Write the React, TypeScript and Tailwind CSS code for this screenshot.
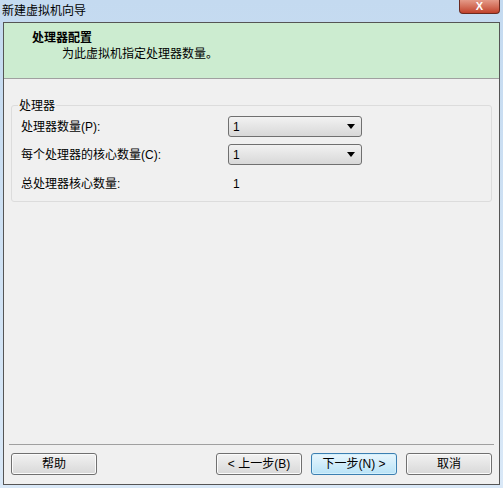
import React from "react";

const font = { fontFamily: '"Liberation Sans", "Noto Sans CJK SC", sans-serif' };

const Combo = () => (
  <div className="flex h-[21px] w-[134px] items-center justify-between rounded-[3px] border border-[#707070] bg-gradient-to-b from-[#f2f2f2] to-[#d8d8d8] pl-[4px] pr-[6px] text-[12px] text-black">
    <span>1</span>
    <svg width="8" height="5" viewBox="0 0 8 5">
      <path d="M0 0h8L4 5z" fill="#000" />
    </svg>
  </div>
);

const Button = ({ label, primary }: { label: string; primary?: boolean }) => (
  <div
    className={
      primary
        ? "flex h-[22px] w-[86px] items-center justify-center rounded-[3px] border border-[#3c7fb1] bg-gradient-to-b from-[#e8f6fd] to-[#b9e3f7] text-[12px] text-black shadow-[inset_0_0_0_1px_#d4f0fc]"
        : "flex h-[22px] w-[86px] items-center justify-center rounded-[3px] border border-[#707070] bg-gradient-to-b from-[#f2f2f2] to-[#d8d8d8] text-[12px] text-black shadow-[inset_0_0_0_1px_#fbfbfb]"
    }
  >
    {label}
  </div>
);

export default function App() {
  return (
    <div
      className="flex h-[488px] w-[503px] flex-col bg-gradient-to-b from-[#c4daf0] to-[#d9e8f7]"
      style={font}
    >
      {/* title bar */}
      <div className="flex h-[22px] items-start justify-between">
        <span className="pl-[2px] pt-[2px] text-[12px] text-black">新建虚拟机向导</span>
        <div className="mr-[3px] flex h-[14px] w-[41px] items-center justify-center rounded-b-[4px] border border-t-0 border-[#6b2a1f] bg-gradient-to-b from-[#e49a88] to-[#c0402a]">
          <span className="text-[11px] font-bold leading-none text-white">X</span>
        </div>
      </div>

      {/* client area */}
      <div className="mx-[3px] mb-[3px] flex flex-1 flex-col border border-[#555] bg-[#f0f0f0]">
        <div className="flex h-[56px] flex-col border-b border-[#a0a0a0] bg-[#ccecd0] pl-[28px] pt-[7px]">
          <span className="text-[12px] font-bold leading-[16px] text-black">处理器配置</span>
          <span className="pl-[30px] text-[12px] leading-[16px] text-black">为此虚拟机指定处理器数量。</span>
        </div>

        <div className="flex-1 px-[7px] pt-[26px]">
          <div className="relative h-[97px] rounded-[3px] border border-[#dcdcdc] px-[9px] pt-[10px]">
            <span className="absolute -top-[8px] left-[6px] bg-[#f0f0f0] px-[1px] text-[12px] leading-[16px] text-black">
              处理器
            </span>
            <div className="flex flex-col gap-[7px]">
              <div className="flex items-center">
                <span className="w-[207px] text-[12px] text-black">处理器数量(P):</span>
                <Combo />
              </div>
              <div className="flex items-center">
                <span className="w-[207px] text-[12px] text-black">每个处理器的核心数量(C):</span>
                <Combo />
              </div>
              <div className="flex h-[24px] items-center">
                <span className="w-[212px] text-[12px] text-black">总处理器核心数量:</span>
                <span className="text-[12px] text-black">1</span>
              </div>
            </div>
          </div>
        </div>

        <div className="mx-[5px] border-t border-[#a0a0a0] border-b-white" />
        <div className="flex h-[39px] items-center px-[7px] pb-[2px]">
          <Button label="帮助" />
          <div className="flex-1" />
          <div className="flex gap-[9px]">
            <Button label="< 上一步(B)" />
            <Button label="下一步(N) >" primary />
            <Button label="取消" />
          </div>
        </div>
      </div>
    </div>
  );
}
